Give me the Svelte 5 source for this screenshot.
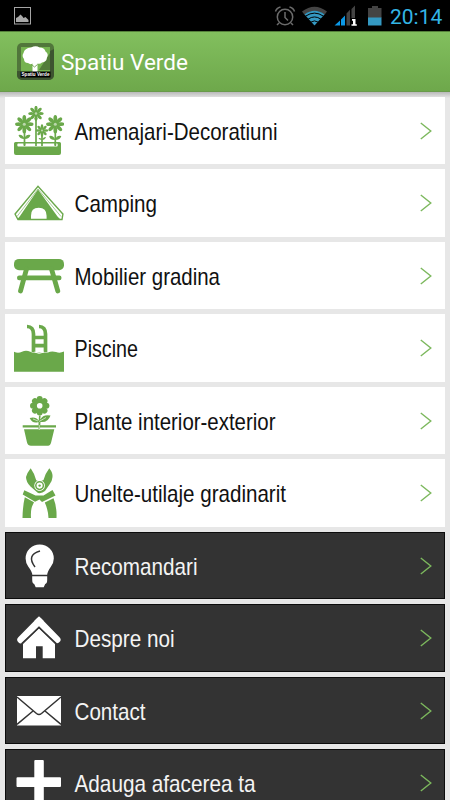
<script lang="ts">
  type Item = { icon: string; label: string; width: number; dark?: boolean };

  const items: Item[] = [
    { icon: 'flowers', label: 'Amenajari-Decoratiuni', width: 203 },
    { icon: 'tent', label: 'Camping', width: 82.5 },
    { icon: 'table', label: 'Mobilier gradina', width: 145.5 },
    { icon: 'pool', label: 'Piscine', width: 63.5 },
    { icon: 'plant', label: 'Plante interior-exterior', width: 201 },
    { icon: 'shears', label: 'Unelte-utilaje gradinarit', width: 211.5 },
    { icon: 'bulb', label: 'Recomandari', width: 123, dark: true },
    { icon: 'home', label: 'Despre noi', width: 100, dark: true },
    { icon: 'mail', label: 'Contact', width: 71, dark: true },
    { icon: 'plus', label: 'Adauga afacerea ta', width: 181, dark: true }
  ];

  const blooms = [
    { x: 10.3, y: 18.2, s: 1 },
    { x: 22, y: 7.5, s: 0.84 },
    { x: 28, y: 24.5, s: 0.68 },
    { x: 41.3, y: 18.2, s: 1 }
  ];
  const petals = [0, 45, 90, 135, 180, 225, 270, 315];
</script>

<div class="screen">
  <div class="status">
    <svg class="picture" width="17" height="18" viewBox="0 0 17 18">
      <rect x=".5" y=".5" width="16" height="16.5" fill="none" stroke="#a5a5a5" />
      <path d="M2 15v-4l2-1 2.500-2.500 2 2 1 1.500 2-1 3 3v2z" fill="#aaa" />
    </svg>
    <svg class="tray" width="108" height="22" viewBox="0 0 108 22">
      <g fill="none" stroke="#6b6b6b" stroke-width="1.500">
        <circle cx="11" cy="12" r="7.700" />
        <path d="M11 7v5.500l3 3M1.500 6.500q1-3.500 5-4.500M20.500 6.500q-1-3.500-5-4.500M5 18l-2 2M17 18l2 2" />
      </g>
      <path d="M28 6.500q12.500-9.500 25 0l-2.500 3.200q-10-7.300-20 0z" fill="#444" />
      <path d="M40.500 20.500 30.500 9.500q10-7.500 20 0z" fill="#3499c2" />
      <path d="M31.500 11.200q9-6.200 18 0M34 14.200q6.500-4.500 13 0M36.700 17.200q3.800-2.600 7.600 0" fill="none" stroke="#000" stroke-width="1" />
      <path d="M60.500 20.500l5.500-5v5zM67 20.500v-6l4-4v10z" fill="#0c98e6" />
      <path d="M72.500 20.500V8.500l3.500-3.700v15.700zM77.500 13V4l3.500-3.500V13z" fill="#444" />
      <path d="M78 14h3.500v5.300h1.300v1.500H77.500v-1.500H79v-3.500h-1z" fill="#fff" />
      <path d="M94 3h4V1h6v2h3.500v10H94z" fill="#444" />
      <path d="M94 12.500h13.500v8H94z" fill="#3499c2" />
    </svg>
    <span class="clock">20:14</span>
  </div>

  <header class="appbar">
    <svg class="logo" width="37" height="37" viewBox="0 0 37 37">
      <rect width="37" height="37" rx="5" fill="#51763b" />
      <path d="M33 8l4-2v26a5 5 0 0 1-5 5H5a5 5 0 0 1-5-5v-4h33z" fill="#3d5430" />
      <rect x="4" y="4" width="29" height="29" fill="#75b350" />
      <path d="M33 10 22 27h11z" fill="#527c39" />
      <path d="M14 4.500q5-2.500 8.500 0 5 0 6 4 3.500 2.500 1.500 6-.5 4.500-5 5-2 2-4.500 1V29h-5v-8.500q-2 1.500-4.500-.5-4 0-4-4-2.500-3-.5-6 1-5 7.500-5.500z" fill="#fff" />
      <path d="M14.500 21.500l3 2.500 3-2.500" fill="none" stroke="#62943f" stroke-width=".8" />
      <rect x="3.500" y="28.500" width="30" height="6" fill="#000" />
      <text x="4.500" y="33" textLength="28" lengthAdjust="spacingAndGlyphs">Spatiu Verde</text>
    </svg>
    <h1>Spatiu Verde</h1>
  </header>

  <main>
    {#each items as item (item.label)}
      <button class="row" class:dark={item.dark} type="button">
        <svg class="icon" width="50" height="50" viewBox="0 0 50 50">
          {#if item.icon === 'flowers'}
            <path d="M10.500 18v21M22 8v30M28 24v14M41.300 18v21" fill="none" stroke="currentColor" stroke-width="1.700" />
            {#each blooms as b}
              <g transform="translate({b.x} {b.y}) scale({b.s})">
                {#each petals as angle}
                  <ellipse cx="0" cy="-5.700" rx="1.900" ry="3.500" transform="rotate({angle})" />
                {/each}
                <circle r="3.600" />
                <circle r="1.500" fill="#fff" fill-opacity=".55" />
              </g>
            {/each}
            <path d="M10.500 33q-5 0-6-4 4-1 6 4zM10.500 33q1-5 6-4-1 4-6 4zM41.300 34q-6 0-6-4 4-1 6 4zM41.300 34q1-5 6-4-1 4-6 4zM28 34q-3 0-3.500-2 3-.500 3.500 2zM28 34q1-3 4-3-1 3-4 3z" />
            <path fill-rule="evenodd" d="M1.500 36h44q1.500 0 1.500 1.500V47q0 2-2 2H2q-2 0-2-2v-9.500Q0 36 1.500 36zm2.300 1.500q-1.300 1.500 0 3h39.400q1.300-1.500 0-3z" />
            <path d="M10.500 36v4M22 36v4M28 36v4M41.300 36v4" stroke="currentColor" stroke-width="1.700" />
          {:else if item.icon === 'tent'}
            <path d="M24 11.500 43.500 38.500 46 41H32.600v-3.300q0-8-7.900-8t-7.700 8V41H3.500L6 38z" />
            <path d="M.7 36.500 24 8.200 49.300 36.500M1 36l3 5.500h44l1-6" fill="none" stroke="currentColor" stroke-width="1.400" />
            <path d="M3 38.500 24 11l23 27.500" fill="none" stroke="currentColor" stroke-width=".6" />
          {:else if item.icon === 'table'}
            <rect x="0" y="7.900" width="50" height="11.300" rx="5" />
            <rect x="3" y="24.600" width="44.500" height="4.700" rx="2.200" />
            <path d="M12.500 18 6.500 40M37.500 18l6.300 22" stroke="currentColor" stroke-width="4.800" stroke-linecap="round" />
          {:else if item.icon === 'pool'}
            <path d="M0 28.700q4 2 8 0 4-2 8.300 0 1.700.800 1.700.800h16q3.500-1.800 8-.500 4 1.500 8-.500v20.200H0z" />
            <path d="M19.500 29V11q0-7.500-6.500-7.500M31.500 29V11q0-7.500-6.500-7.500M19 14.500h12.500M19 22.600h12.500" fill="none" stroke="currentColor" stroke-width="3.700" />
            <path d="M20.500 29q4.500 2.700 9.500 0" fill="none" stroke="#fff" />
          {:else if item.icon === 'plant'}
            <g transform="translate(25.700 9.800)">
              {#each petals as angle}
                <circle cx="0" cy="-6.700" r="3" transform="rotate({angle})" />
              {/each}
              <circle r="6.800" />
              <circle r="2.800" fill="#fff" />
            </g>
            <path d="M24.500 33V26q-6 2-8.800-4 6-1.800 9 2.800l.3-5.300h1.700l-.5 4q3-5.500 10.300-4-2.500 7.500-10 6.500L26 33z" />
            <path d="M25 25.500l7-4M24 25l-5-2" stroke="#fff" stroke-width=".6" />
            <path d="M8.700 29.200H42v2.300H8.700zM10 33.200h30.300l-3.200 13.300q-1 3.300-3 3.300H17q-3 0-4-3.300z" />
            <path d="M25.300 29v5" stroke="#fff" stroke-width=".6" />
          {:else if item.icon === 'shears'}
            <path d="M16.700.3q4 5.700 5.500 12l3.300 1.500L29.500 12Q31 6 35.300.3 39 5 38.500 9q-.5 5-3 7.500L31 23q-3 2.700-7 2l-7.500-6.500Q12 14 12 9q1-4 4.700-8.700z" />
            <path d="M10.300 22.200 21.500 27.500h8L38.500 22l3 5.500-13.500 6.500-2.500-2.500-4.500 2.300L8.700 26.500z" />
            <path d="M10.800 29.300 20 34.200 18 38.500Q16.500 43 17 50H8.500Q8.700 38 10.800 29.300zM39.500 30.300q3.500 8.700 3 19.700h-8q-.3-8-3.700-15.500z" />
            <circle cx="25.600" cy="17.600" r="5.300" fill="#fff" />
            <circle cx="25.600" cy="17.600" r="3.800" fill="none" stroke="currentColor" stroke-width="1.500" />
            <circle cx="25.600" cy="17.600" r="1.200" />
          {:else if item.icon === 'bulb'}
            <path d="M18.300 33.700Q18.300 31 14.200 25.500 11.600 21.500 11.600 17.500a14.100 14.100 0 0 1 28.200 0q0 4-2.800 8-3.800 5.500-3.800 8.200z" />
            <path d="M18.200 35.300h15v3.500q0 4-2 4.200l-1.500 3.300h-8L20.200 43q-2-.2-2-4.200z" />
            <path d="M21 26q-9-12 5-16" fill="none" stroke="#333" stroke-width="1.500" />
          {:else if item.icon === 'home'}
            <path d="M25 8.300 6.800 26.800M25 8.300l18 18.300" fill="none" stroke="#fff" stroke-width="7" stroke-linecap="round" />
            <path d="M25 3.200l5 5h-10z" />
            <path d="M25 15.500 41 31v14.200H28.700V33.200H22v12H9V31z" />
            <path d="M7.500 30.800 25 14.300l17.500 16.500" fill="none" stroke="#333" stroke-width="1.300" />
          {:else if item.icon === 'mail'}
            <rect x="3" y="10" width="44" height="29.500" />
            <path d="M3 11l19.500 16.500q2.500 2 5 0L47 11M3 38.300 19 25M47 38.300 31 25" fill="none" stroke="#333" stroke-width="1.500" />
          {:else}
            <path d="M21.300 2h7.500q1 0 1 1v16.300H46q1 0 1 1V28q0 1-1 1H29.800v16.300q0 1-1 1h-7.500q-1 0-1-1V29H3.500q-1 0-1-1v-7.700q0-1 1-1h16.800V3q0-1 1-1z" />
          {/if}
        </svg>
        <svg class="label" width="230" height="36" viewBox="0 0 230 36">
          <text x="0.500" y="27" textLength={item.width} lengthAdjust="spacingAndGlyphs">{item.label}</text>
        </svg>
        <svg class="chevron" width="12" height="18" viewBox="0 0 12 18">
          <path d="M.8 1 10.800 9 .8 17" />
        </svg>
      </button>
    {/each}
  </main>
</div>

<style>
  :global(body) {
    margin: 0;
    overflow: hidden;
    background: #e7e7e7;
  }

  .screen {
    width: 450px;
    height: 800px;
    overflow: hidden;
    display: flex;
    flex-direction: column;
    background: #e7e7e7;
  }

  .status {
    box-sizing: border-box;
    flex: none;
    height: 31px;
    padding: 0 8px 0 14px;
    display: flex;
    align-items: center;
    background: #000;
  }

  .tray {
    margin-left: auto;
    margin-top: 1px;
  }

  .clock {
    width: 52px;
    margin-left: 8px;
    padding-top: 2px;
    color: #33b5e5;
    font: 21px/28px Roboto, sans-serif;
    text-align: right;
    white-space: nowrap;
  }

  .appbar {
    box-sizing: border-box;
    flex: none;
    height: 61px;
    padding-left: 17px;
    display: flex;
    align-items: center;
    gap: 7px;
    border-top: 1px solid #55803b;
    border-bottom: 1px solid #699a4b;
    background: linear-gradient(#82bf5e, #6ea84b);
  }

  .logo {
    display: block;
    flex: none;
    overflow: visible;
  }

  .logo text {
    fill: #fff;
    font: bold 5px 'Liberation Sans', sans-serif;
  }

  h1 {
    margin: 0;
    color: #fff;
    font: 400 22.500px/28px Roboto, sans-serif;
  }

  main {
    flex: 1;
    min-height: 0;
    overflow: hidden;
    padding: 4.800px 5px 0;
    display: flex;
    flex-direction: column;
    gap: 5px;
    background: linear-gradient(#b9b9b9, #e7e7e7 6px);
  }

  .row {
    box-sizing: border-box;
    flex: none;
    width: 440px;
    height: 67.530px;
    margin: 0;
    padding: 0 13px 0 9px;
    display: flex;
    align-items: center;
    border: 0;
    border-radius: 0;
    background: #fff;
    color: #6aa84a;
    text-align: left;
  }

  .row.dark {
    background: #333;
    color: #fff;
    box-shadow: inset 0 0 0 1px #0c0c0c;
  }

  .icon {
    flex: none;
    fill: currentColor;
  }

  .label {
    margin-left: 10px;
    overflow: visible;
  }

  .label text {
    fill: #111;
    font: 24px 'Liberation Sans Narrow', 'Liberation Sans', sans-serif;
  }

  .dark .label text {
    fill: #f4f4f4;
  }

  .chevron {
    margin-left: auto;
    fill: none;
    stroke: #7cb85d;
    stroke-width: 1.400;
  }
</style>
